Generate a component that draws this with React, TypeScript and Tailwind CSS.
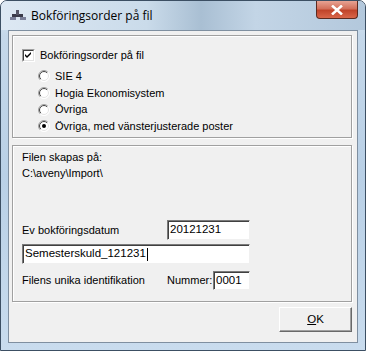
import React from "react";

const font = { fontFamily: '"Liberation Sans", Arial, sans-serif' };

function Radio({ checked }: { checked?: boolean }) {
  return (
    <svg width="12" height="12" viewBox="0 0 12 12" className="shrink-0">
      <defs>
        <linearGradient id="ro" x1="0" y1="0" x2="1" y2="1">
          <stop offset="0.45" stopColor="#a0a0a0" />
          <stop offset="0.55" stopColor="#ffffff" />
        </linearGradient>
        <linearGradient id="ri" x1="0" y1="0" x2="1" y2="1">
          <stop offset="0.45" stopColor="#404040" />
          <stop offset="0.55" stopColor="#e3e3e3" />
        </linearGradient>
      </defs>
      <circle cx="6" cy="6" r="5.5" fill="#fff" stroke="url(#ro)" strokeWidth="1" />
      <circle cx="6" cy="6" r="4.5" fill="#fff" stroke="url(#ri)" strokeWidth="1" />
      {checked && <circle cx="6" cy="6" r="2" fill="#000" />}
    </svg>
  );
}

function Checkbox() {
  return (
    <div className="w-[13px] h-[13px] shrink-0 border-t border-l border-t-[#a0a0a0] border-l-[#a0a0a0] border-b border-r border-b-white border-r-white">
      <div className="w-full h-full bg-white border-t border-l border-t-[#404040] border-l-[#404040] border-b border-r border-b-[#e3e3e3] border-r-[#e3e3e3] flex items-center justify-center">
        <svg width="7" height="7" viewBox="0 0 7 7">
          <path d="M0 2 L2 4 L6 0 L6 2 L2 6 L0 4 Z" fill="#000" />
        </svg>
      </div>
    </div>
  );
}

function TextBox({ value, className, caret }: { value: string; className: string; caret?: boolean }) {
  return (
    <div className={`bg-white border-t border-l border-t-[#7a7a7a] border-l-[#7a7a7a] border-b border-r border-b-[#f0f0f0] border-r-[#f0f0f0] shadow-[inset_1px_1px_0_#404040] flex items-center pl-[2px] text-[11.5px] leading-none text-black ${className}`}>
      {value}
      {caret && <span className="inline-block w-px h-[13px] bg-black ml-px" />}
    </div>
  );
}

const groupCls =
  "border border-[#a0a0a0] shadow-[inset_1px_1px_0_#fff,1px_1px_0_#fff]";

export default function App() {
  return (
    <div
      className="relative w-[366px] h-[351px] rounded-t-[7px] border border-[#3c4f63] bg-[linear-gradient(180deg,#d9e6f2_0%,#c5d8ea_10%,#b9d0e6_50%,#c9dcee_100%)] overflow-hidden"
      style={font}
    >
      {/* title bar */}
      <div className="h-[29px] flex items-center bg-[linear-gradient(90deg,#dde8f3_0%,#cadbea_40%,#a9bfd3_55%,#c3d5e6_70%,#b3c8dc_100%)]">
        <svg width="18" height="14" viewBox="0 0 18 14" className="ml-[8px] mr-[4px]">
          <rect x="3" y="5" width="11" height="3" fill="#3a3a4a" />
          <rect x="7" y="1" width="3" height="5" fill="#555566" />
          <rect x="1" y="8" width="6" height="3" fill="#7a7f99" />
          <rect x="11" y="8" width="6" height="3" fill="#7a7f99" />
        </svg>
        <span className="text-[12px] text-black" style={{ fontFamily: '"Open Sans", "Noto Sans", sans-serif' }}>
          Bokföringsorder på fil
        </span>
        <div className="ml-auto mr-[7px] self-start w-[42px] h-[18px] rounded-b-[4px] border border-t-0 border-[#5b2a20] bg-[linear-gradient(180deg,#e8a393_0%,#d3705b_45%,#c0442a_55%,#d9664a_100%)] flex items-center justify-center">
          <svg width="12" height="10" viewBox="0 0 12 10">
            <path d="M1 0.5 L11 9.5 M11 0.5 L1 9.5" stroke="#fff" strokeWidth="2.5" />
          </svg>
        </div>
      </div>

      {/* client area */}
      <div className="mx-[7px] h-[313px] bg-[#f0f0f0] border border-[#7f8fa0] pl-[3px] pr-[5px] pt-[4px] flex flex-col text-[11px] text-black leading-none">
        {/* group 1 */}
        <div className={`${groupCls} h-[103px] pl-[9px] pt-[13px]`}>
          <div className="flex items-center gap-[5px] h-[13px]">
            <Checkbox />
            <span>Bokföringsorder på fil</span>
          </div>
          <div className="pl-[16px] pt-[6px] flex flex-col">
            {[
              ["SIE 4", false],
              ["Hogia Ekonomisystem", false],
              ["Övriga", false],
              ["Övriga, med vänsterjusterade poster", true],
            ].map(([label, on]) => (
              <div key={label as string} className="flex items-center gap-[5px] h-[16.7px]">
                <Radio checked={on as boolean} />
                <span>{label as string}</span>
              </div>
            ))}
          </div>
        </div>

        {/* group 2 */}
        <div className={`${groupCls} mt-[7px] h-[157px] pl-[9px] pt-[5px] flex flex-col`}>
          <div className="h-[13px] flex items-center">Filen skapas på:</div>
          <div className="h-[13px] mt-[3px] flex items-center">C:\aveny\Import\</div>
          <div className="mt-[40px] flex items-center">
            <span className="w-[145px]">Ev bokföringsdatum</span>
            <TextBox value="20121231" className="w-[83px] h-[20px]" />
          </div>
          <TextBox value="Semesterskuld_121231" caret className="mt-[4px] w-[228px] h-[20px]" />
          <div className="mt-[7px] flex items-center">
            <span className="w-[145px]">Filens unika identifikation</span>
            <span className="w-[46px]">Nummer:</span>
            <TextBox value="0001" className="w-[37px] h-[19px]" />
          </div>
        </div>

        {/* buttons */}
        <div className="flex justify-end mt-[5px]">
          <button className="w-[73px] h-[25px] bg-[#f0f0f0] border border-t-white border-l-white border-b-[#696969] border-r-[#696969] shadow-[inset_-1px_-1px_0_#a0a0a0] flex items-center justify-center text-[11.5px] text-black">
            <span>
              <span className="underline">O</span>K
            </span>
          </button>
        </div>
      </div>
    </div>
  );
}
